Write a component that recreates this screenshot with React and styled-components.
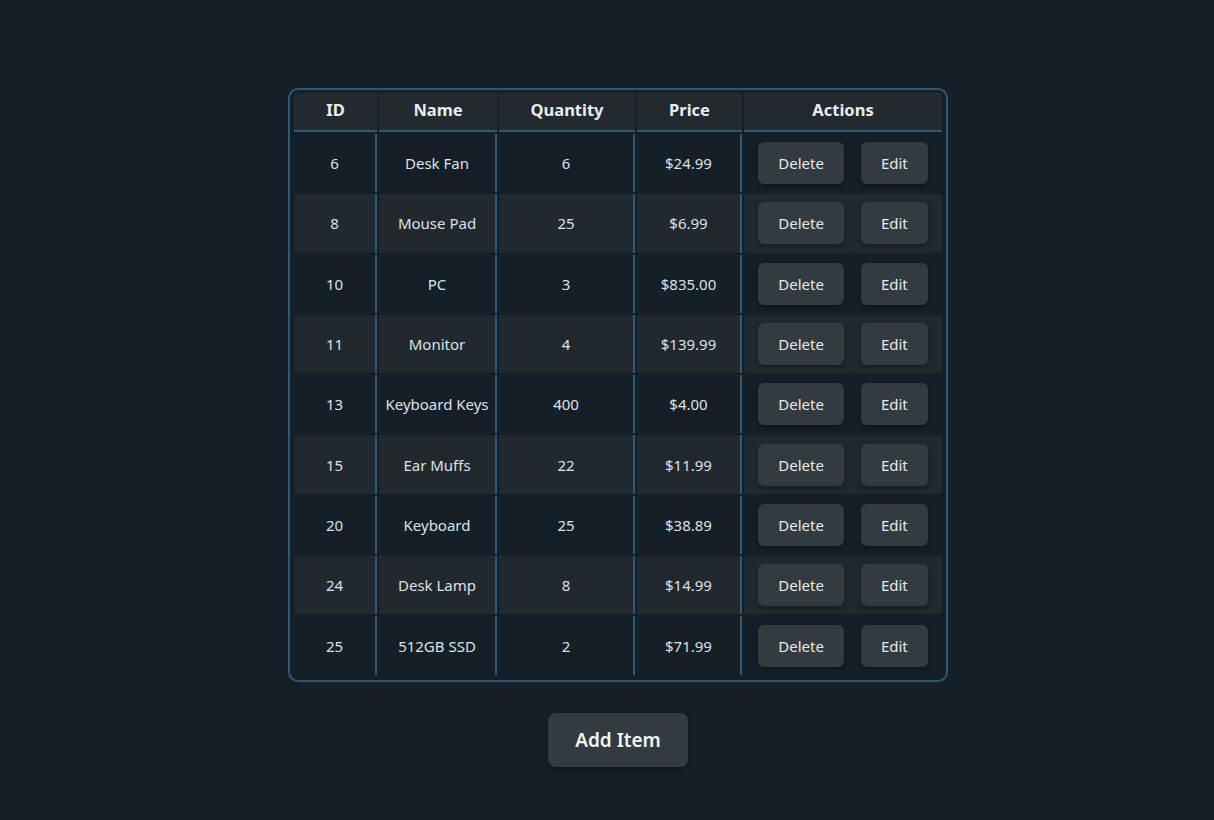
import React from 'react';
import styled, { createGlobalStyle } from 'styled-components';

const items = [
  { id: 6, name: 'Desk Fan', quantity: 6, price: '$24.99' },
  { id: 8, name: 'Mouse Pad', quantity: 25, price: '$6.99' },
  { id: 10, name: 'PC', quantity: 3, price: '$835.00' },
  { id: 11, name: 'Monitor', quantity: 4, price: '$139.99' },
  { id: 13, name: 'Keyboard Keys', quantity: 400, price: '$4.00' },
  { id: 15, name: 'Ear Muffs', quantity: 22, price: '$11.99' },
  { id: 20, name: 'Keyboard', quantity: 25, price: '$38.89' },
  { id: 24, name: 'Desk Lamp', quantity: 8, price: '$14.99' },
  { id: 25, name: '512GB SSD', quantity: 2, price: '$71.99' },
];

const columns = [
  { label: 'ID', width: 83 },
  { label: 'Name', width: 118 },
  { label: 'Quantity', width: 136 },
  { label: 'Price', width: 105 },
  { label: 'Actions', width: 198 },
];

const GlobalStyle = createGlobalStyle`
  *, *::before, *::after {
    box-sizing: border-box;
  }
  html, body {
    margin: 0;
    background-color: #151f27;
    font-family: "Noto Sans", "Open Sans", sans-serif;
    color: #dfe3e6;
  }
`;

const Page = styled.div`
  display: flex;
  flex-direction: column;
  align-items: center;
  min-height: 100vh;
  padding: 88px 0 0 22px;
`;

const TableWrap = styled.div`
  width: 660px;
  padding: 1px 2px 3px 2px;
  border: 2px solid #2f5877;
  border-radius: 10px;
`;

const Table = styled.table`
  width: 652px;
  table-layout: fixed;
  border-collapse: separate;
  border-spacing: 2px;
`;

const HeadCell = styled.th`
  height: 39px;
  padding: 0 0 4px;
  background-color: #22292f;
  border-bottom: 2px solid #2f5877;
  font-size: 16.5px;
  font-weight: 700;
  color: #e9ecee;
  text-align: center;
`;

const Row = styled.tr`
  background-color: ${props => (props.striped ? '#21292f' : 'transparent')};
`;

const Cell = styled.td`
  height: 58.3px;
  padding: 0;
  text-align: center;
  font-size: 15px;
  color: #dde1e4;
  border-right: ${props => (props.last ? 'none' : '2px solid #2f5877')};
`;

const Actions = styled.div`
  display: flex;
  justify-content: center;
  gap: 17px;
`;

const Button = styled.button`
  height: 42px;
  padding: 0 20px;
  border: none;
  border-radius: 6px;
  background-color: #323c40;
  box-shadow: 0 2px 4px rgba(0, 0, 0, 0.35);
  font-family: inherit;
  font-size: 15px;
  color: #e6e9eb;
  cursor: pointer;
`;

const AddButton = styled(Button)`
  height: 54px;
  margin-top: 31px;
  padding: 0 27px;
  border-radius: 8px;
  font-size: 19px;
  font-weight: 600;
  color: #f2f4f5;
`;

const App = () => (
  <>
    <GlobalStyle />
    <Page>
      <TableWrap>
        <Table>
          <colgroup>
            {columns.map(col => (
              <col key={col.label} style={{ width: col.width }} />
            ))}
          </colgroup>
          <thead>
            <tr>
              {columns.map(col => (
                <HeadCell key={col.label}>{col.label}</HeadCell>
              ))}
            </tr>
          </thead>
          <tbody>
            {items.map((item, index) => (
              <Row key={item.id} striped={index % 2 === 1}>
                <Cell>{item.id}</Cell>
                <Cell>{item.name}</Cell>
                <Cell>{item.quantity}</Cell>
                <Cell>{item.price}</Cell>
                <Cell last>
                  <Actions>
                    <Button>Delete</Button>
                    <Button>Edit</Button>
                  </Actions>
                </Cell>
              </Row>
            ))}
          </tbody>
        </Table>
      </TableWrap>
      <AddButton>Add Item</AddButton>
    </Page>
  </>
);

export default App;
